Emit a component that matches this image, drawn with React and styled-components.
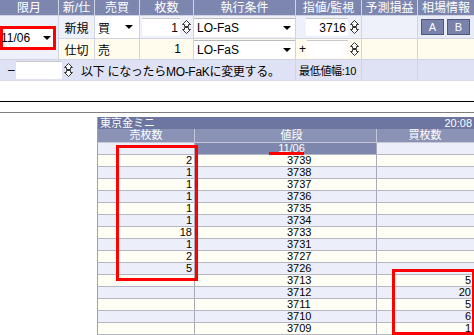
import React from "react";
import styled, { createGlobalStyle } from "styled-components";

const GlobalStyle = createGlobalStyle`
  html, body { margin: 0; padding: 0; background: #fff; }
  body {
    width: 474px;
    height: 335px;
    overflow: hidden;
    font-family: "Liberation Sans", "Noto Sans CJK JP", sans-serif;
    font-size: 12px;
    color: #000;
  }
`;

const Page = styled.div`
  display: flex;
  flex-direction: column;
  width: 474px;
  height: 335px;
  overflow: hidden;
`;

const OrderTable = styled.div`
  display: grid;
  grid-template-columns: 58px 35px 44px 53px 101px 65px 55px 56px;
  grid-template-rows: 15px 22px 20px 20px;
  background: #cfd3e3;
  gap: 1px 1px;
  border-bottom: 1px solid #d7dae8;
`;

const Head = styled.div`
  display: flex;
  align-items: center;
  justify-content: center;
  background: #7c86ae;
  color: #fff;
  font-size: 12px;
  line-height: 14px;
  white-space: nowrap;
  overflow: hidden;
`;

const Cell = styled.div`
  display: flex;
  align-items: center;
  gap: 2px;
  padding: 0 2px;
  background: ${(p) => p.$bg || "#eef0fa"};
  justify-content: ${(p) => p.$justify || "flex-start"};
  grid-column: ${(p) => p.$col || "auto"};
  grid-row: ${(p) => p.$row || "auto"};
  white-space: nowrap;
  overflow: hidden;
`;

const MonthSelect = styled.div`
  display: flex;
  align-items: center;
  justify-content: space-between;
  width: 50px;
  height: 18px;
  margin-left: -2px;
  border: 3px solid #f00;
  background: #fff;
  padding: 0 2px 0 0;
  font-size: 12px;
  text-indent: -2px;
`;

const Select = styled.div`
  display: flex;
  align-items: center;
  justify-content: space-between;
  flex: 1;
  height: 18px;
  padding: 0 4px 0 3px;
  background: #fff;
  border-top: 1px solid #bbb;
`;

const Input = styled.div`
  display: flex;
  align-items: center;
  justify-content: flex-end;
  width: ${(p) => p.$w || 42}px;
  height: 17px;
  padding-right: 2px;
  background: #fff;
  border-top: 1px solid #c8c8c8;
`;

const Btn = styled.div`
  display: flex;
  align-items: center;
  justify-content: center;
  width: 21px;
  height: 14px;
  background: #7882aa;
  color: #fff;
  border: 1px solid #4f587c;
  font-size: 11px;
`;

const Note = styled.span`
  margin-left: 6px;
  letter-spacing: -0.3px;
`;

const Small = styled.span`
  font-size: 11px;
  letter-spacing: -0.3px;
`;

const Gap = styled.div`
  height: 21px;
  border-bottom: 1px solid #000;
`;

const Rule = styled.div`
  height: 10px;
  border-bottom: 1px solid #808080;
`;

const Board = styled.div`
  position: relative;
  margin: 4px 0 0 97px;
  width: 380px;
  border-left: 1px solid #a0a0a0;
  font-size: 11px;
`;

const TitleBar = styled.div`
  display: flex;
  justify-content: space-between;
  align-items: center;
  height: 12px;
  padding: 0 6px 0 2px;
  background: #6c76a1;
  color: #fff;
  font-size: 11px;
  line-height: 12px;
`;

const BoardRow = styled.div`
  display: grid;
  grid-template-columns: 97px 182px 101px;
  height: ${(p) => p.$h || 12}px;
  border-bottom: 1px solid #b4b6c4;
  box-sizing: border-box;
  line-height: 11px;
`;

const BCell = styled.div`
  display: flex;
  align-items: center;
  justify-content: ${(p) => p.$justify || "flex-end"};
  padding: ${(p) => p.$pad || "0 2px 0 0"};
  background: ${(p) => p.$bg};
  color: ${(p) => p.$color || "#000"};
  border-right: 1px solid ${(p) => p.$line || "#a8aabb"};
  white-space: nowrap;
`;

const RedBox = styled.div`
  position: absolute;
  border: 3px solid #f00;
  left: ${(p) => p.$x}px;
  top: ${(p) => p.$y}px;
  width: ${(p) => p.$w}px;
  height: ${(p) => p.$h}px;
  box-sizing: border-box;
`;

const RedLine = styled.div`
  position: absolute;
  left: 171px;
  top: 35px;
  width: 35px;
  height: 3px;
  background: #f00;
`;

const Spin = () => (
  <svg width="9" height="14" viewBox="0 0 9 14" style={{ flex: "none" }}>
    <path d="M4.5 0.5 L8.5 4.5 L6.5 4.5 L6.5 6.5 L2.5 6.5 L2.5 4.5 L0.5 4.5 Z" fill="#fff" stroke="#333" />
    <path d="M4.5 13.5 L8.5 9.5 L6.5 9.5 L6.5 7.5 L2.5 7.5 L2.5 9.5 L0.5 9.5 Z" fill="#fff" stroke="#333" />
  </svg>
);

const Arrow = () => (
  <svg width="8" height="4" viewBox="0 0 8 4" style={{ flex: "none" }}>
    <path d="M0 0 H8 L4 4 Z" fill="#000" />
  </svg>
);

const sells = ["2", "1", "1", "1", "1", "1", "18", "1", "2", "5", "", "", "", "", ""];
const prices = ["3739", "3738", "3737", "3736", "3735", "3734", "3733", "3731", "3727", "3726", "3713", "3712", "3711", "3710", "3709"];
const buys = ["", "", "", "", "", "", "", "", "", "", "5", "20", "5", "6", "1"];

const App = () => (
  <Page>
    <GlobalStyle />
    <OrderTable>
      {["限月", "新/仕", "売買", "枚数", "執行条件", "指値/監視", "予測損益", "相場情報"].map((h) => (
        <Head key={h}>{h}</Head>
      ))}

      <Cell $row="2 / 4" $col="1" $bg="#eef0fa">
        <MonthSelect>
          <span>11/06</span>
          <Arrow />
        </MonthSelect>
      </Cell>
      <Cell $justify="center">新規</Cell>
      <Cell $bg="#fff" $justify="space-between" style={{ padding: "0 6px 0 3px" }}>
        <span>買</span>
        <Arrow />
      </Cell>
      <Cell>
        <Input $w={39}>1</Input>
        <Spin />
      </Cell>
      <Cell style={{ padding: 0 }}>
        <Select>
          <span>LO-FaS</span>
          <Arrow />
        </Select>
      </Cell>
      <Cell style={{ paddingLeft: 10 }}>
        <Input $w={43}>3716</Input>
        <Spin />
      </Cell>
      <Cell />
      <Cell $bg="#e9ebf6" style={{ gap: 3, padding: "0 0 0 3px" }}>
        <Btn>A</Btn>
        <Btn>B</Btn>
      </Cell>

      <Cell $bg="#fffcee" $justify="center">仕切</Cell>
      <Cell $bg="#fffcee" style={{ paddingLeft: 3 }}>売</Cell>
      <Cell $bg="#fffcee" $justify="flex-end" style={{ paddingRight: 12 }}>1</Cell>
      <Cell $bg="#fffcee" style={{ padding: 0 }}>
        <Select>
          <span>LO-FaS</span>
          <Arrow />
        </Select>
      </Cell>
      <Cell $bg="#fffcee" style={{ paddingLeft: 3 }}>
        <span style={{ width: 6 }}>+</span>
        <Input $w={43} />
        <Spin />
      </Cell>
      <Cell $bg="#fffcee" />
      <Cell $bg="#fffcee" />

      <Cell $col="1 / 6" $bg="#dfe2f4" style={{ paddingLeft: 8 }}>
        <span style={{ width: 6 }}>–</span>
        <Input $w={44} />
        <Spin />
        <Note>以下 になったらMO-FaKに変更する。</Note>
      </Cell>
      <Cell $bg="#dfe2f4" style={{ paddingLeft: 3 }}>
        <Small>最低値幅:10</Small>
      </Cell>
      <Cell $bg="#dfe2f4" />
      <Cell $bg="#dfe2f4" />
    </OrderTable>

    <Gap />
    <Rule />

    <Board>
      <TitleBar>
        <span>東京金ミニ</span>
        <span>20:08</span>
      </TitleBar>
      <BoardRow $h={14} style={{ borderBottom: "1px solid #c8cad8" }}>
        <BCell $bg="#8a92b6" $color="#fff" $justify="center" $pad="0" $line="#c3c7da">売枚数</BCell>
        <BCell $bg="#8a92b6" $color="#fff" $justify="center" $pad="0 0 0 12px" $line="#c3c7da">値段</BCell>
        <BCell $bg="#8a92b6" $color="#fff" $justify="center" $pad="0 4px 0 0">買枚数</BCell>
      </BoardRow>
      <BoardRow>
        <BCell $bg="#eceffa" />
        <BCell $bg="#7d87ae" $color="#fff" $justify="center" $pad="0 0 0 12px">11/06</BCell>
        <BCell $bg="#eceffa" />
      </BoardRow>
      {prices.map((p, i) => {
        const bg = i % 2 === 0 ? "#fffef4" : "#eceffa";
        return (
          <BoardRow key={p}>
            <BCell $bg={bg}>{sells[i]}</BCell>
            <BCell $bg={bg} $justify="flex-start" $pad="0 0 0 92px">{p}</BCell>
            <BCell $bg={bg} $pad="0 6px 0 0">{buys[i]}</BCell>
          </BoardRow>
        );
      })}
      <RedBox $x={18} $y={28} $w={82} $h={136} />
      <RedLine />
      <RedBox $x={294} $y={152} $w={83} $h={66} />
    </Board>
  </Page>
);

export default App;
